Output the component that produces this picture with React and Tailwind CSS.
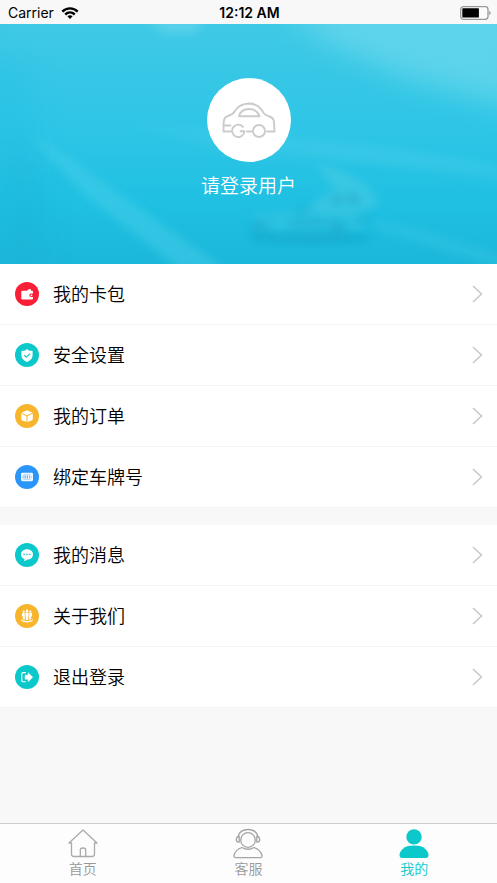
import React from "react";

function WifiIcon() {
  return (
    <svg className="h-3 w-[18px]" viewBox="0 0 18 12" fill="none" stroke="#000" strokeWidth="2.4" aria-hidden="true">
      <path d="M1.3 4.7C5.6.3 12.4.3 16.700 4.700" />
      <path d="M4.200 7.500C7 4.900 11 4.900 13.800 7.500" />
      <path d="M6.400 9.200C7.900 7.900 10.100 7.900 11.600 9.200L9 11.900Z" fill="#000" stroke="none" />
    </svg>
  );
}

function BatteryIcon() {
  return (
    <svg className="h-[14px] w-[31px]" viewBox="0 0 31 14" aria-hidden="true">
      <rect x="0.700" y="0.700" width="27.300" height="12.600" rx="2.800" fill="#fbfbfb" stroke="#999" strokeWidth="1.300" />
      <rect x="2.300" y="2.300" width="16.600" height="9.300" rx="0.600" fill="#000" />
      <path d="M29.200 4.800Q30.700 5.500 30.700 7T29.200 9.200Z" fill="#999" />
    </svg>
  );
}

function HeroBackdrop() {
  return (
    <svg className="absolute inset-0 h-full w-full" viewBox="0 0 497 240" preserveAspectRatio="none" aria-hidden="true">
      <defs>
        <linearGradient id="sky" x1="0" y1="0" x2="0" y2="1">
          <stop offset="0" stopColor="#3fc9e6" />
          <stop offset="0.45" stopColor="#2ec5e6" />
          <stop offset="0.75" stopColor="#1fc0e2" />
          <stop offset="1" stopColor="#1cb7da" />
        </linearGradient>
        <filter id="soft" x="-30%" y="-50%" width="160%" height="200%">
          <feGaussianBlur stdDeviation="4" />
        </filter>
        <filter id="wide" x="-50%" y="-50%" width="200%" height="200%">
          <feGaussianBlur stdDeviation="14" />
        </filter>
      </defs>
      <rect width="497" height="240" fill="url(#sky)" />
      <path d="M280-20H520V85L410 55L330 20Z" fill="#74dced" opacity="0.600" filter="url(#wide)" />
      <path d="M145-4H205L195 9L165 9Z" fill="#7ddced" opacity="0.450" filter="url(#soft)" />
      <path d="M-20 20L30 50L40 150L-20 120Z" fill="#20bfe4" opacity="0.400" filter="url(#wide)" />
      <path d="M0 118L40 140L50 240H0Z" fill="#14a7ca" opacity="0.200" filter="url(#wide)" />
      <path d="M30 112L52 122L225 245H180L90 175Z" fill="#4bd0e9" opacity="0.450" filter="url(#soft)" />
      <path d="M130 98L230 130L497 148V140L370 120L260 108Z" fill="#51d1e9" opacity="0.200" filter="url(#soft)" />
      <path d="M220 112L380 122L520 145V162L340 135Z" fill="#4bcfe9" opacity="0.200" filter="url(#soft)" />
      <path d="M315 140Q350 145 373 168L378 183L350 190L300 187L335 165Z" fill="#5bd0e5" opacity="0.400" filter="url(#soft)" />
      <path d="M252 190L310 184L370 190L362 206L330 211L258 208Z" fill="#4bcbe2" opacity="0.300" filter="url(#soft)" />
      <ellipse cx="310" cy="214" rx="62" ry="5" fill="#0797bb" opacity="0.420" filter="url(#soft)" />
      <g fill="#1098b9" opacity="0.350" filter="url(#soft)">
        <path d="M291 189L315 178L307 190Z" />
        <rect x="290" y="196" width="36" height="7" rx="3" />
        <ellipse cx="337" cy="203" rx="10" ry="7" />
        <ellipse cx="260" cy="203" rx="10" ry="6" />
        <ellipse cx="337" cy="176" rx="6" ry="6" />
        <ellipse cx="353" cy="175" rx="7" ry="6" />
        <path d="M350 200L370 190V198Z" />
      </g>
      <path d="M375 196L420 205L520 238V250L370 203Z" fill="#45cce8" opacity="0.300" filter="url(#soft)" />
    </svg>
  );
}

function CarIcon() {
  return (
    <svg className="h-9 w-[54px]" viewBox="0 0 54 36" fill="none" stroke="#cbcbcb" strokeWidth="1.900" strokeLinecap="round" strokeLinejoin="round" aria-hidden="true">
      <path d="M8.500 29.500H1.500V22Q1.500 15 6 14Q11 12.500 13 9Q17 2 27 1.500Q36 1.500 41 10Q42 12.500 47.500 14.500Q52 16 52 20.500L52.500 29.500H45" />
      <path d="M17 14.300Q19 7 27 7Q35 7 37.500 14.300Z" />
      <path d="M2 23.500H8.500M25 29.500H29.500" />
      <path d="M22.500 29.300A6.200 6.200 0 1 1 21 24.800M18.500 29.300H22.500" />
      <circle cx="37" cy="29" r="6" />
    </svg>
  );
}

const glyphs = {
  wallet: (
    <g fill="#fff">
      <path d="M7.500 8.800H11.800L14.200 7L16 7.400V8.800H17Q18 8.800 18 9.800V11.500H15.700Q14.300 12 14.300 13.300T15.700 15H18V16.400Q18 17.400 17 17.400H7.400Q6.300 17.400 6.300 16.400V9.800Q6.300 8.800 7.500 8.800Z" />
      <circle cx="16.400" cy="13.300" r="0.900" />
    </g>
  ),
  shield: (
    <>
      <path d="M12 6L13.700 7.500L17.600 8V12.500Q17.300 16.800 12 19Q6.700 16.800 6.400 12.500V8L10.300 7.500Z" fill="#fff" />
      <path d="M9.300 12.300L11.300 14.200L15 10.600" fill="none" stroke="#0bc9cb" strokeWidth="1.200" />
    </>
  ),
  box: (
    <g fill="#fff">
      <path d="M12 6.200L17.500 8.700L12 11.200L6.500 8.700Z" />
      <path d="M6.200 9.600L11.500 12.200V18L7.200 16.300Q6.200 15.900 6.200 15Z" />
      <path d="M17.800 9.600L12.500 12.200V18L16.800 16.300Q17.800 15.900 17.800 15Z" />
    </g>
  ),
  plate: (
    <>
      <rect x="6" y="7.800" width="12" height="8.400" rx="1.400" fill="#fff" />
      <path d="M8.200 9.300H15.800M8.200 14.700H15.800M7.200 10.300V13.700M16.800 10.300V13.700" stroke="#2b96fa" strokeWidth="0.400" />
      <path d="M9 10.400V13.600M10.800 10.400V13.600M12.600 10.400V13.600M14.700 10.400V13.600" stroke="#2b96fa" strokeWidth="0.800" />
    </>
  ),
  chat: (
    <>
      <path d="M12 6.300C15.400 6.300 18 8.400 18 11.400S15.400 16.500 12.300 16.500C11.500 17.200 10.300 17.900 9 17.900C9.500 17.200 9.600 16.500 9.400 15.900C7.400 15.100 6 13.600 6 11.400C6 8.400 8.600 6.300 12 6.300Z" fill="#fff" />
      <g fill="#0bc9cb">
        <circle cx="9.100" cy="11.400" r="0.800" />
        <circle cx="12" cy="11.400" r="0.800" />
        <circle cx="14.900" cy="11.400" r="0.800" />
      </g>
    </>
  ),
  people: (
    <g fill="#fff">
      <circle cx="12" cy="6.900" r="1.300" />
      <circle cx="8.700" cy="7.700" r="1.100" />
      <circle cx="15.300" cy="7.700" r="1.100" />
      <path d="M10.500 8.500H13.500L13.700 12.200L13.200 12.800V15.900H10.800V12.800L10.300 12.200Z" />
      <path d="M7.100 9H9.700L9.900 15.500H7.800V12.600L6.900 12.100Z" />
      <path d="M14.300 9H16.900L17.100 12.100L16.200 12.600V15.500H14.100Z" />
      <path d="M6.500 14.800Q4.700 18.200 12 18.400Q19.300 18.200 17.500 14.800Q17.500 17 12 17Q6.500 17 6.500 14.800Z" />
    </g>
  ),
  exit: (
    <>
      <path d="M10.800 7.600H8.200Q6.800 7.600 6.800 9V15.400Q6.800 16.800 8.200 16.800H10.800" fill="none" stroke="#fff" strokeWidth="1.100" />
      <path d="M10 10.100H13.200V7.700L17.800 12.200L13.200 16.700V14.300H10Z" fill="#fff" stroke="#fff" strokeWidth="0.400" strokeLinejoin="round" />
    </>
  ),
};

const groups = [
  [
    { label: "我的卡包", icon: "wallet", color: "bg-[#fa1f37]" },
    { label: "安全设置", icon: "shield", color: "bg-[#0bc9cb]" },
    { label: "我的订单", icon: "box", color: "bg-[#f7b52c]" },
    { label: "绑定车牌号", icon: "plate", color: "bg-[#2b96fa]" },
  ],
  [
    { label: "我的消息", icon: "chat", color: "bg-[#0bc9cb]" },
    { label: "关于我们", icon: "people", color: "bg-[#f7b52c]" },
    { label: "退出登录", icon: "exit", color: "bg-[#0bc9cb]" },
  ],
];

function MenuRow({ item }) {
  return (
    <li className="border-b border-[#f4f4f4]">
      <button type="button" className="flex h-[60px] w-full items-center pr-[14px] pl-[15px] text-left">
        <span className={"h-6 w-6 shrink-0 rounded-full " + item.color}>
          <svg className="h-6 w-6" viewBox="0 0 24 24" aria-hidden="true">{glyphs[item.icon]}</svg>
        </span>
        <span className="ml-[14px] flex-1 pt-[2px] text-[18px] leading-6 font-[350] text-black">{item.label}</span>
        <svg className="h-[18px] w-[11px]" viewBox="0 0 11 18" fill="none" stroke="#c7c7cc" strokeWidth="1.500" aria-hidden="true">
          <path d="M1 1L9.500 9L1 17" />
        </svg>
      </button>
    </li>
  );
}

function HomeIcon() {
  return (
    <svg className="h-8 w-8" viewBox="0 0 32 32" fill="none" stroke="#aaa" strokeWidth="1.300" strokeLinecap="round" strokeLinejoin="round" aria-hidden="true">
      <path d="M2 16L16 3L30 16H27.500V27Q27.500 29.500 25 29.500H7Q4.500 29.500 4.500 27V16Z" />
      <path d="M13.300 29.500V23Q13.300 21 16 21T18.700 23V29.500" />
    </svg>
  );
}

function ServiceIcon() {
  return (
    <svg className="h-8 w-8" viewBox="0 0 32 32" fill="none" stroke="#a5a5a5" strokeWidth="1.300" strokeLinecap="round" strokeLinejoin="round" aria-hidden="true">
      <circle cx="16" cy="13" r="7.300" />
      <path d="M6 10C7 5 11 2.500 16 2.500S25 5 26 10" />
      <path d="M7.200 9.500H6.300Q4.300 10 4.300 12.500T6.500 15H7.200ZM24.800 9.500H25.700Q27.700 10 27.700 12.500T25.500 15H24.800Z" />
      <path d="M10 20.500Q3.500 22.500 2 28.500Q1.600 30.700 4 30.700H28Q30.400 30.700 30 28.500Q28.500 22.500 22 20.500Q16 24 10 20.500Z" />
    </svg>
  );
}

function MineIcon() {
  return (
    <svg className="h-8 w-8" viewBox="0 0 32 32" fill="#0bc9cb" aria-hidden="true">
      <circle cx="16" cy="9.900" r="7.700" />
      <path d="M10 19Q16 18 22 19Q29 21 30.500 27.500Q30.700 31 27.500 31H4.500Q1.300 31 1.500 27.500Q3 21 10 19Z" />
    </svg>
  );
}

function Tab({ label, active, children }) {
  return (
    <a href="#" aria-current={active ? "page" : undefined} className={"flex flex-col items-center pt-[3px] " + (active ? "text-[#0bc9cb]" : "text-[#999]")}>
      {children}
      <span className="text-[14px] leading-5 font-[350]">{label}</span>
    </a>
  );
}

export default function App() {
  return (
    <div className="flex min-h-screen flex-col bg-[#f8f8f8] font-['Inter','Noto_Sans_CJK_SC',sans-serif]">
      <div className="grid h-6 grid-cols-3 items-center pt-px pr-[6px] pl-2 text-[14px] leading-6 text-black">
        <div className="flex items-center gap-[7px]">
          <span>Carrier</span>
          <WifiIcon />
        </div>
        <time className="text-center font-semibold">12:12 AM</time>
        <div className="flex justify-end">
          <BatteryIcon />
        </div>
      </div>

      <header className="relative h-60">
        <HeroBackdrop />
        <div className="relative flex flex-col items-center pt-[54px]">
          <div className="flex h-[84px] w-[84px] items-center justify-center rounded-full bg-white">
            <CarIcon />
          </div>
          <a href="#" className="mt-[11px] text-[19px] leading-7 font-[350] text-white">请登录用户</a>
        </div>
      </header>

      <main className="flex flex-col gap-[17px]">
        {groups.map((items) => (
          <ul key={items[0].label} className="bg-white">
            {items.map((item) => (
              <MenuRow key={item.label} item={item} />
            ))}
          </ul>
        ))}
      </main>

      <nav className="mt-auto grid h-[60px] grid-cols-3 border-t border-[#ccc] bg-[#fdfdfd]">
        <Tab label="首页">
          <HomeIcon />
        </Tab>
        <Tab label="客服">
          <ServiceIcon />
        </Tab>
        <Tab label="我的" active>
          <MineIcon />
        </Tab>
      </nav>
    </div>
  );
}
